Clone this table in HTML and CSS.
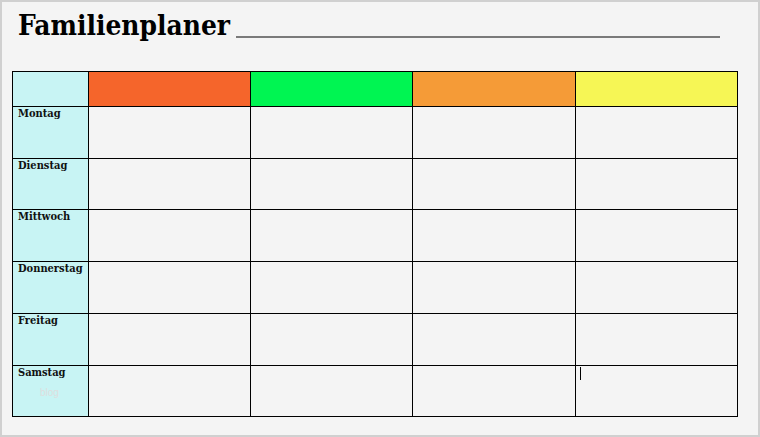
FILE: index.html
```html
<!DOCTYPE html>
<html lang="de">
<head>
<meta charset="utf-8">
<link rel="stylesheet" href="styles.css">
</head>
<body>
<div class="page">
  <div class="title-row">
    <h1 class="title">Familienplaner</h1>
    <span class="name-line"></span>
  </div>
  <div class="planner">
    <div class="cell head-day"></div>
    <div class="cell c1"></div>
    <div class="cell c2"></div>
    <div class="cell c3"></div>
    <div class="cell c4"></div>

    <div class="cell day">Montag</div>
    <div class="cell"></div><div class="cell"></div><div class="cell"></div><div class="cell"></div>

    <div class="cell day">Dienstag</div>
    <div class="cell"></div><div class="cell"></div><div class="cell"></div><div class="cell"></div>

    <div class="cell day">Mittwoch</div>
    <div class="cell"></div><div class="cell"></div><div class="cell"></div><div class="cell"></div>

    <div class="cell day">Donnerstag</div>
    <div class="cell"></div><div class="cell"></div><div class="cell"></div><div class="cell"></div>

    <div class="cell day">Freitag</div>
    <div class="cell"></div><div class="cell"></div><div class="cell"></div><div class="cell"></div>

    <div class="cell day">Samstag<span class="mark">blog</span></div>
    <div class="cell"></div><div class="cell"></div><div class="cell"></div><div class="cell cursor-cell"><span class="caret"></span></div>
  </div>
</div>
</body>
</html>
```

FILE: styles.css
```css
html, body {
  margin: 0;
  padding: 0;
}
body {
  background: #f4f4f4;
}
.page {
  box-sizing: border-box;
  width: 760px;
  height: 437px;
  border: 2px solid #d0d0d0;
  background: #f4f4f4;
  padding: 0 0 0 10px;
}
.title-row {
  display: flex;
  align-items: flex-end;
  height: 40px;
  padding-left: 6px;
}
.title {
  margin: 0;
  font-family: "DejaVu Serif", serif;
  font-stretch: condensed;
  font-weight: bold;
  font-size: 27.8px;
  line-height: 31px;
  color: #000;
  padding-bottom: 1px;
}
.name-line {
  width: 484px;
  margin-left: 6px;
  margin-bottom: 4px;
  border-bottom: 2px solid #7a7a7a;
}
.planner {
  margin-top: 29px;
  width: 726px;
  box-sizing: border-box;
  display: grid;
  grid-template-columns: 75px 161px 161px 162px 161px;
  grid-template-rows: 34px 51px 50px 51px 51px 51px 50px;
  gap: 1px;
  padding: 1px;
  background: #000;
}
.cell {
  background: #f4f4f4;
}
.head-day, .day {
  background: #c8f4f4;
}
.c1 { background: #f5652b; }
.c2 { background: #00f552; }
.c3 { background: #f59b37; }
.c4 { background: #f6f655; }
.day {
  position: relative;
  font-family: "DejaVu Serif", serif;
  font-stretch: condensed;
  font-weight: bold;
  font-size: 11px;
  line-height: 14px;
  padding: 0 0 0 5px;
  color: #111;
}
.mark {
  position: absolute;
  left: 27px;
  top: 20px;
  font-family: "Liberation Sans", sans-serif;
  font-weight: normal;
  font-size: 10px;
  color: #dedede;
}
.cursor-cell {
  position: relative;
}
.caret {
  position: absolute;
  left: 4px;
  top: 1px;
  width: 1px;
  height: 13px;
  background: #000;
}
```
